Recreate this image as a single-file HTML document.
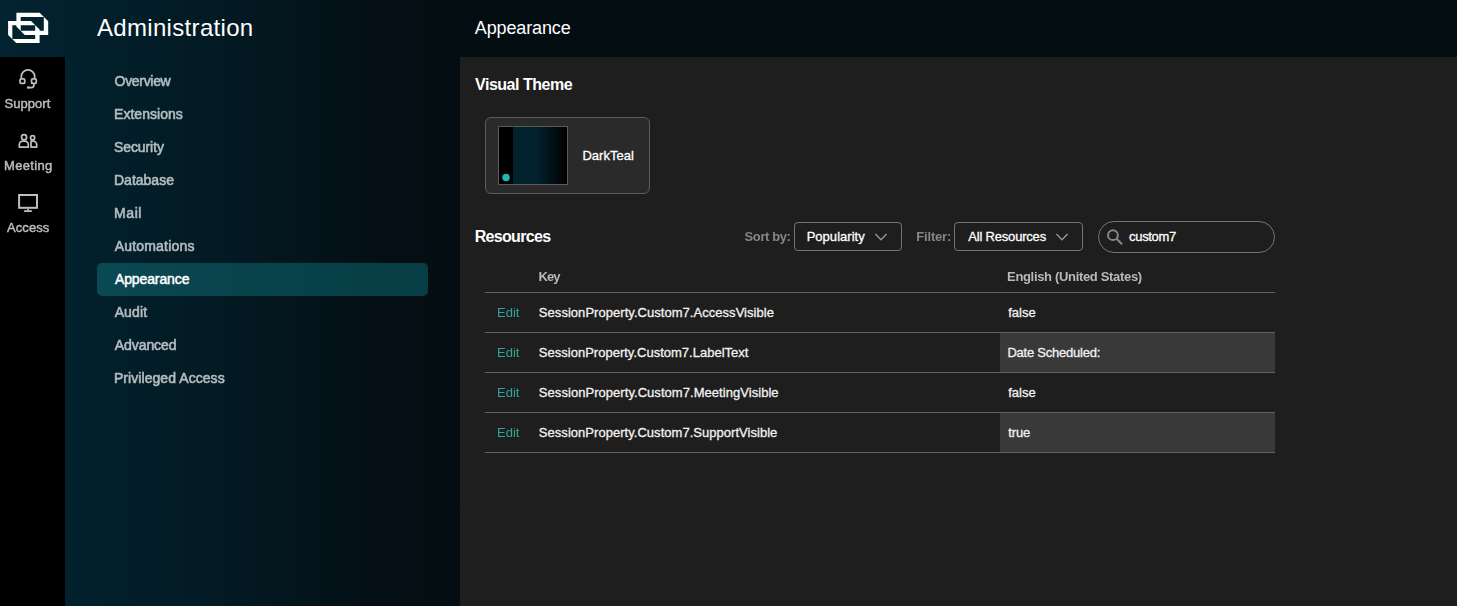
<!DOCTYPE html>
<html lang="en">
<head>
<meta charset="utf-8">
<title>Administration - Appearance</title>
<style>
*{box-sizing:border-box;margin:0;padding:0}
html,body{width:1457px;height:606px;overflow:hidden;background:#050c10}
body{position:relative;font-family:"Liberation Sans",Arial,sans-serif;color:#fff;
 background:linear-gradient(90deg,#02232f 0px,#02202b 90px,#031a23 220px,#040f15 380px,#040d12 460px,#040d12 100%)}
.t{position:absolute;white-space:nowrap;line-height:1;transform-origin:0 0}
#sidebar{position:absolute;left:0;top:57px;width:65px;height:549px;background:#000}
#main{position:absolute;left:460px;top:57px;width:997px;height:549px;background:#1e1e1e}
.nav{color:#b3bcc0;-webkit-text-stroke:0.6px #b3bcc0}
.navsel{color:#fff;-webkit-text-stroke:0.5px #fff}
.side{color:#bcbcbc;-webkit-text-stroke:0.45px #bcbcbc}
#sel{position:absolute;left:97px;top:263px;width:331px;height:33px;border-radius:5px;
 background:linear-gradient(90deg,#0a4853,#073d44)}
.h2{font-weight:bold;color:#fff}
.lbl{font-weight:bold;color:#868686}
.th{font-weight:bold;color:#b9b9b9}
.td{color:#f2f2f2;-webkit-text-stroke:0.3px #f2f2f2}
.sel{color:#fff;-webkit-text-stroke:0.3px #fff}
.dt{color:#fff;-webkit-text-stroke:0.3px #fff}
.edit{color:#31a39b}
.box{position:absolute;border:1px solid #747474;border-radius:4px;background:#1e1e1e}
.line{position:absolute;left:485px;width:790px;height:1px;background:#606060}
.hl{position:absolute;left:1000px;width:275px;height:39px;background:#393939}
svg{position:absolute;overflow:visible}
#gray{position:absolute;left:0;top:0;width:1457px;height:606px;will-change:transform}
</style>
</head>
<body>
<!-- logo -->
<svg id="logo" style="left:0;top:0" width="60" height="57" viewBox="0 0 60 57">
 <g fill="#fff" fill-rule="evenodd">
  <path d="M16.4 12.7 H39.7 L48.2 21.2 V34.9 H24.7 L16.4 26.6 Z M20.7 17 V30.7 H43.8 V17 Z"/>
  <path d="M8.1 21 H31 L39.6 29.6 V43 H16.2 L8.1 34.9 Z M12.3 25.2 V39.1 H35.2 V25.2 Z"/>
 </g>
</svg>

<div id="sidebar"></div>
<!-- sidebar icons -->
<svg style="left:0;top:0" width="65" height="606" viewBox="0 0 65 606" fill="none" stroke="#bebebe" stroke-width="1.75" stroke-linejoin="round" stroke-linecap="round">
 <!-- headset -->
 <path d="M21.3 78.2 V76.5 A6.7 6.7 0 0 1 34.7 76.5 V78.2"/>
 <rect x="20.05" y="78.75" width="4.7" height="4.7" rx="1.3"/>
 <rect x="31.55" y="78.75" width="4.7" height="4.7" rx="1.3"/>
 <path d="M34 84.2 v0.5 a2.8 2.8 0 0 1 -2.8 2.8 h-2.6"/>
 <circle cx="28.2" cy="87.5" r="1.3" fill="#bebebe" stroke="none"/>
 <!-- people -->
 <circle cx="24.05" cy="137.25" r="2.55"/>
 <path d="M19.3 147 V144.7 A3.5 3.5 0 0 1 22.8 141.2 H24.8 A3.5 3.5 0 0 1 28.3 144.7 V147 Z"/>
 <circle cx="32.6" cy="137.75" r="2.05"/>
 <path d="M31 147 V141.2 H33.2 A3.5 3.5 0 0 1 36.7 144.7 V147 Z"/>
 <!-- monitor -->
 <rect x="19.1" y="195" width="17.9" height="12.8" stroke-width="2" stroke-linejoin="miter"/>
 <rect x="27.3" y="208.6" width="1.6" height="1.8" fill="#bebebe" stroke="none"/>
 <rect x="24.1" y="210.2" width="7.7" height="1.8" fill="#bebebe" stroke="none"/>
</svg>
<!-- nav -->
<div id="sel"></div>

<div id="main"></div>
<!-- theme card -->
<div class="box" style="left:485px;top:117px;width:165px;height:77px;border-color:#5c5c5c;border-radius:6px;background:#2a2a2a"></div>
<div style="position:absolute;left:498px;top:126px;width:70px;height:59px;border:1px solid #5a5a5a;
 background:linear-gradient(90deg,#000 0,#000 14px,#02222e 14px,#02212c 38px,#011017 54px,#000 67px)"></div>
<svg style="left:500px;top:171px" width="13" height="13" viewBox="0 0 13 13"><circle cx="6.05" cy="6.55" r="3.75" fill="#21b4b6"/></svg>

<div class="box" style="left:794px;top:222px;width:108px;height:29px"></div>
<svg style="left:875px;top:233px" width="12" height="8" viewBox="0 0 12 8" fill="none" stroke="#979797" stroke-width="1.3"><path d="M0.4 1 L6 6.8 L11.6 1"/></svg>
<div class="box" style="left:954px;top:222px;width:129px;height:29px"></div>
<svg style="left:1056px;top:233px" width="12" height="8" viewBox="0 0 12 8" fill="none" stroke="#979797" stroke-width="1.3"><path d="M0.4 1 L6 6.8 L11.6 1"/></svg>
<div class="box" style="left:1098px;top:221px;width:177px;height:32px;border-radius:16px"></div>
<svg style="left:1106px;top:229px" width="18" height="18" viewBox="0 0 18 18" fill="none" stroke="#888" stroke-width="2"><circle cx="6.95" cy="6.15" r="4.9"/><path d="M10.6 9.8 L16 15.2"/></svg>

<!-- table -->
<div class="line" style="top:292px"></div>
<div class="line" style="top:332px"></div>
<div class="line" style="top:372px"></div>
<div class="line" style="top:412px"></div>
<div class="line" style="top:452px"></div>
<div class="hl" style="top:333px"></div>
<div class="hl" style="top:413px"></div>

<div class="t" id="admin" style="left:96.97px;top:16.26px;font-size:24px;letter-spacing:0.322px;">Administration</div>
<div class="t" id="hdr" style="left:474.86px;top:19.42px;font-size:18px;letter-spacing:-0.135px;">Appearance</div>
<div class="t nav navsel" id="n7" style="left:114.93px;top:271.96px;font-size:14px;letter-spacing:-0.108px;">Appearance</div>
<div class="t h2" id="vt" style="left:475.09px;top:76.94px;font-size:16px;letter-spacing:-0.490px;">Visual Theme</div>
<div class="t dt" id="dt" style="left:582.41px;top:148.92px;font-size:13px;letter-spacing:0.010px;">DarkTeal</div>
<div class="t h2" id="res" style="left:474.63px;top:229.04px;font-size:16px;letter-spacing:-0.673px;">Resources</div>
<div class="t sel" id="pop" style="left:806.64px;top:230.02px;font-size:13px;letter-spacing:0.037px;">Popularity</div>
<div class="t sel" id="ar" style="left:968.31px;top:230.02px;font-size:13px;letter-spacing:-0.196px;">All Resources</div>
<div class="t sel" id="c7" style="left:1129.08px;top:229.52px;font-size:13px;letter-spacing:-0.333px;">custom7</div>
<div class="t td" id="k1" style="left:538.87px;top:305.62px;font-size:13px;letter-spacing:0.041px;">SessionProperty.Custom7.AccessVisible</div>
<div class="t td" id="v1" style="left:1008.19px;top:305.62px;font-size:13px;letter-spacing:0.036px;">false</div>
<div class="t td" id="k2" style="left:538.87px;top:345.62px;font-size:13px;letter-spacing:0.009px;">SessionProperty.Custom7.LabelText</div>
<div class="t td" id="v2" style="left:1007.47px;top:345.62px;font-size:13px;letter-spacing:-0.237px;">Date Scheduled:</div>
<div class="t td" id="k3" style="left:538.87px;top:385.62px;font-size:13px;letter-spacing:0.048px;">SessionProperty.Custom7.MeetingVisible</div>
<div class="t td" id="v3" style="left:1008.19px;top:385.62px;font-size:13px;letter-spacing:0.036px;">false</div>
<div class="t td" id="k4" style="left:538.87px;top:425.62px;font-size:13px;letter-spacing:0.033px;">SessionProperty.Custom7.SupportVisible</div>
<div class="t td" id="v4" style="left:1008.37px;top:425.62px;font-size:13px;letter-spacing:-0.174px;">true</div>
<div id="gray">
<div class="t side" id="s1" style="left:4.48px;top:97.02px;font-size:13px;letter-spacing:0.051px;">Support</div>
<div class="t side" id="s2" style="left:4.05px;top:158.72px;font-size:13px;letter-spacing:0.308px;">Meeting</div>
<div class="t side" id="s3" style="left:7.01px;top:221.42px;font-size:13px;letter-spacing:0.078px;">Access</div>
<div class="t nav" id="n1" style="left:114.56px;top:73.96px;font-size:14px;letter-spacing:-0.311px;">Overview</div>
<div class="t nav" id="n2" style="left:114.01px;top:106.96px;font-size:14px;letter-spacing:0.042px;">Extensions</div>
<div class="t nav" id="n3" style="left:113.94px;top:139.96px;font-size:14px;letter-spacing:-0.081px;">Security</div>
<div class="t nav" id="n4" style="left:113.99px;top:172.96px;font-size:14px;">Database</div>
<div class="t nav" id="n5" style="left:114.12px;top:205.96px;font-size:14px;letter-spacing:0.549px;">Mail</div>
<div class="t nav" id="n6" style="left:114.64px;top:238.96px;font-size:14px;letter-spacing:0.199px;">Automations</div>
<div class="t nav" id="n8" style="left:114.66px;top:304.96px;font-size:14px;letter-spacing:0.116px;">Audit</div>
<div class="t nav" id="n9" style="left:114.84px;top:337.96px;font-size:14px;letter-spacing:-0.082px;">Advanced</div>
<div class="t nav" id="n10" style="left:113.95px;top:370.96px;font-size:14px;letter-spacing:0.064px;">Privileged Access</div>
<div class="t lbl" id="sb" style="left:744.58px;top:230.02px;font-size:13px;letter-spacing:-0.405px;">Sort by:</div>
<div class="t lbl" id="fl" style="left:916.27px;top:230.02px;font-size:13px;letter-spacing:-0.185px;">Filter:</div>
<div class="t th" id="k" style="left:538.38px;top:270.12px;font-size:13px;letter-spacing:-0.848px;">Key</div>
<div class="t th" id="en" style="left:1007.06px;top:270.12px;font-size:13px;letter-spacing:-0.328px;">English (United States)</div>
<div class="t edit" id="e1" style="left:497.05px;top:305.62px;font-size:13px;letter-spacing:-0.025px;">Edit</div>
<div class="t edit" id="e2" style="left:497.05px;top:345.62px;font-size:13px;letter-spacing:-0.025px;">Edit</div>
<div class="t edit" id="e3" style="left:497.05px;top:385.62px;font-size:13px;letter-spacing:-0.025px;">Edit</div>
<div class="t edit" id="e4" style="left:497.05px;top:425.62px;font-size:13px;letter-spacing:-0.025px;">Edit</div>
</div>
</body>
</html>
